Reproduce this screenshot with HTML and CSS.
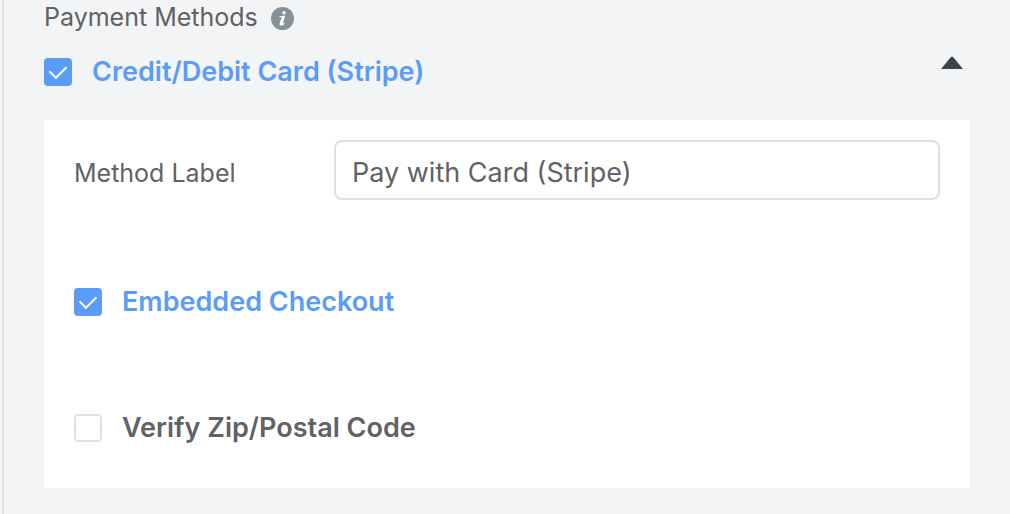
FILE: index.html
```html
<!DOCTYPE html>
<html lang="en">
<head>
<meta charset="utf-8">
<meta name="viewport" content="width=device-width, initial-scale=1">
<title>Payment Methods</title>
<link rel="stylesheet" href="styles.css">
</head>
<body>
<main class="settings">
  <h1 class="heading">Payment Methods
    <svg class="info" viewBox="0 0 23 23" role="img" aria-label="Info">
      <circle cx="11.5" cy="11.5" r="11.5" fill="#869197"/>
      <circle cx="13" cy="5.8" r="1.7" fill="#fff"/>
      <path d="M8.300 9.200l5.900-.7-2.300 7.700c-.3 1 .3 1 1.600-.4l.6.5c-1.500 1.900-2.900 2.500-4.200 2.200-1.300-.3-1.500-1.300-1.100-2.600l1.600-5c.2-.8-.2-1-2.100-1z" fill="#fff"/>
    </svg>
  </h1>
  <div class="method">
    <label class="check"><input class="box" type="checkbox" checked><span>Credit/Debit Card (Stripe)</span></label>
    <button class="toggle" type="button" aria-label="Collapse" aria-expanded="true">
      <svg class="arrow" viewBox="0 0 22 13" aria-hidden="true"><path d="M0 13L10 1Q11 0 12 1L22 13z" fill="#3d4449"/></svg>
    </button>
  </div>
  <section class="panel">
    <div class="field">
      <label class="field-label" for="method-label">Method Label</label>
      <input class="text" id="method-label" type="text" value="Pay with Card (Stripe)">
    </div>
    <label class="check"><input class="box" type="checkbox" checked><span>Embedded Checkout</span></label>
    <label class="check"><input class="box" type="checkbox"><span>Verify Zip/Postal Code</span></label>
  </section>
</main>
</body>
</html>
```
FILE: styles.css
```css
* {
  box-sizing: border-box;
}

body {
  margin: 0;
  background: #f3f4f6;
  color: #606266;
  font-family: Inter, "Liberation Sans", sans-serif;
}

.settings {
  min-height: 100vh;
  margin-left: 2px;
  padding: 0 40px 26px;
  border-left: 2px solid #dfe2e7;
}

.heading {
  display: flex;
  align-items: center;
  gap: 13px;
  margin: 0;
  font-size: 25px;
  font-weight: 400;
  line-height: 34px;
}

.info {
  width: 23px;
  height: 23px;
  margin-top: 2px;
}

.method {
  display: flex;
  align-items: center;
  justify-content: space-between;
  padding: 20px 0 30px;
}

.check {
  display: flex;
  align-items: center;
  gap: 20px;
  font-size: 27px;
  font-weight: 600;
  line-height: 36px;
}

.check:has(:checked) {
  color: #5a9cf8;
}

.box {
  flex: none;
  appearance: none;
  width: 28px;
  height: 28px;
  margin: 0;
  border: 2px solid #dcdfe6;
  border-radius: 4px;
  background: #fff;
}

.box:checked {
  border-color: #5a9cf8;
  background: #5a9cf8;
}

.box:checked::before {
  content: "";
  display: block;
  width: 8px;
  height: 14px;
  margin: 2px auto;
  border: solid #fff;
  border-width: 0 2px 2px 0;
  transform: rotate(45deg);
}

.toggle {
  display: flex;
  align-items: center;
  padding: 0 7px 20px;
  border: 0;
  background: none;
}

.arrow {
  width: 22px;
  height: 13px;
}

.panel {
  display: flex;
  flex-direction: column;
  align-items: flex-start;
  gap: 90px;
  padding: 20px 30px 42px;
  background: #fff;
}

.field {
  display: flex;
  align-items: center;
  align-self: stretch;
  margin-bottom: -6px;
}

.field-label {
  flex: none;
  width: 260px;
  padding-top: 6px;
  font-size: 25px;
}

.text {
  flex: 1;
  min-width: 0;
  height: 60px;
  padding: 4px 16px 0;
  border: 2px solid #dcdfe6;
  border-radius: 8px;
  background: #fff;
  color: inherit;
  font: inherit;
  font-size: 27px;
}
```
